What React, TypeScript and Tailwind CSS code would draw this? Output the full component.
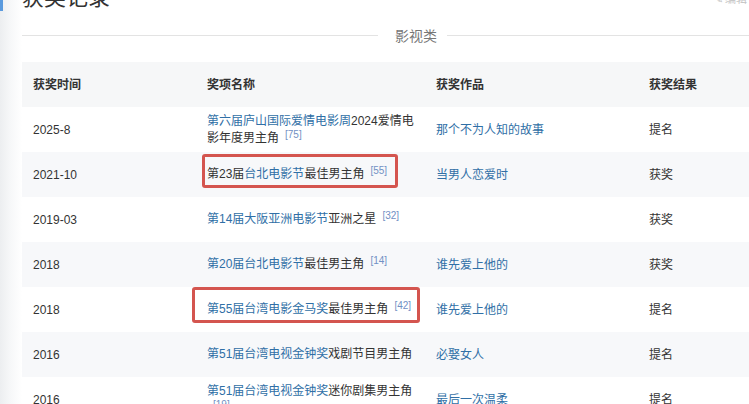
import React from "react";

type Part = { t: string; link?: boolean };
type Row = {
  time: string;
  name: Part[];
  sup?: string;
  work?: string;
  result: string;
  box?: "a" | "b";
};

const rows: Row[] = [
  {
    time: "2025-8",
    name: [{ t: "第六届庐山国际爱情电影周", link: true }, { t: "2024爱情电影年度男主角" }],
    sup: "[75]",
    work: "那个不为人知的故事",
    result: "提名",
  },
  {
    time: "2021-10",
    name: [{ t: "第23届" }, { t: "台北电影节", link: true }, { t: "最佳男主角" }],
    sup: "[55]",
    work: "当男人恋爱时",
    result: "获奖",
    box: "a",
  },
  {
    time: "2019-03",
    name: [{ t: "第14届大阪亚洲电影节", link: true }, { t: "亚洲之星" }],
    sup: "[32]",
    result: "获奖",
  },
  {
    time: "2018",
    name: [{ t: "第20届台北电影节", link: true }, { t: "最佳男主角" }],
    sup: "[14]",
    work: "谁先爱上他的",
    result: "获奖",
  },
  {
    time: "2018",
    name: [{ t: "第55届台湾电影金马奖", link: true }, { t: "最佳男主角" }],
    sup: "[42]",
    work: "谁先爱上他的",
    result: "提名",
    box: "b",
  },
  {
    time: "2016",
    name: [{ t: "第51届台湾电视金钟奖", link: true }, { t: "戏剧节目男主角" }],
    work: "必娶女人",
    result: "提名",
  },
  {
    time: "2016",
    name: [{ t: "第51届台湾电视金钟奖", link: true }, { t: "迷你剧集男主角" }],
    sup: "[19]",
    work: "最后一次温柔",
    result: "提名",
  },
];

export default function App() {
  return (
    <div className="w-[749px] h-[404px] overflow-hidden bg-white flex text-[#333] font-['Liberation_Sans','Noto_Sans_CJK_SC',sans-serif]">
      <div className="w-[22px] shrink-0 bg-gradient-to-r from-[#eceef0] via-[#f7f8f9] to-white">
        <div className="w-[3px] h-[11px] bg-[#5a9ade]" />
      </div>
      <div className="flex-1 flex flex-col min-w-0">
        <div className="-mt-[20px] h-[30px] flex justify-between">
          <div className="text-[22px] leading-[30px] text-[#333] font-['Noto_Sans_CJK_SC',sans-serif]">
            获奖记录
          </div>
          <div className="self-end mb-[6px] pr-[2px] text-[11px] leading-[12px] text-[#c4c4c4] font-['Noto_Sans_CJK_SC',sans-serif]">
            ✎ 编辑
          </div>
        </div>
        <div className="mt-[15px] h-[20px] flex items-center">
          <div className="w-[356px] h-px bg-[#e3e3e3]" />
          <div className="pl-[17px] pr-[10px] text-[14px] leading-[20px] text-[#777] font-['Noto_Sans_CJK_SC',sans-serif]">
            影视类
          </div>
          <div className="flex-1 h-px bg-[#e3e3e3]" />
        </div>
        <div className="mt-[17px] flex flex-col text-[12px]">
          <div className="grid grid-cols-[174px_229px_213px_1fr] h-[45px] items-center bg-[#f6f7f8] font-semibold">
            <div className="pl-[11px]">获奖时间</div>
            <div className="pl-[11px]">奖项名称</div>
            <div className="pl-[11px]">获奖作品</div>
            <div className="pl-[11px]">获奖结果</div>
          </div>
          {rows.map((r, i) => (
            <div
              key={i}
              className={`grid grid-cols-[174px_229px_213px_1fr] h-[45px] shrink-0 items-center ${
                i % 2 === 1 ? "bg-[#f7f8fa]" : "bg-white"
              }`}
            >
              <div className="pl-[11px]">{r.time}</div>
              <div className="relative h-full flex items-center pl-[11px] pr-[4px]">
                <div className="leading-[17px]">
                  {r.name.map((p, j) => (
                    <span key={j} className={p.link ? "text-[#306fa6]" : ""}>
                      {p.t}
                    </span>
                  ))}
                  {r.sup && (
                    <span className="relative -top-[4px] ml-[6px] text-[10px] leading-[10px] text-[#7190c4]">
                      {r.sup}
                    </span>
                  )}
                </div>
                {r.box === "a" && (
                  <div className="absolute left-[6px] top-[2px] w-[196px] h-[34px] border-[3px] border-[#d4554f] rounded-[3px]" />
                )}
                {r.box === "b" && (
                  <div className="absolute -left-[4px] top-0 w-[228px] h-[36px] border-[3px] border-[#d4554f] rounded-[3px]" />
                )}
              </div>
              <div className="pl-[11px] text-[#306fa6]">{r.work ?? ""}</div>
              <div className="pl-[11px]">{r.result}</div>
            </div>
          ))}
        </div>
      </div>
    </div>
  );
}
